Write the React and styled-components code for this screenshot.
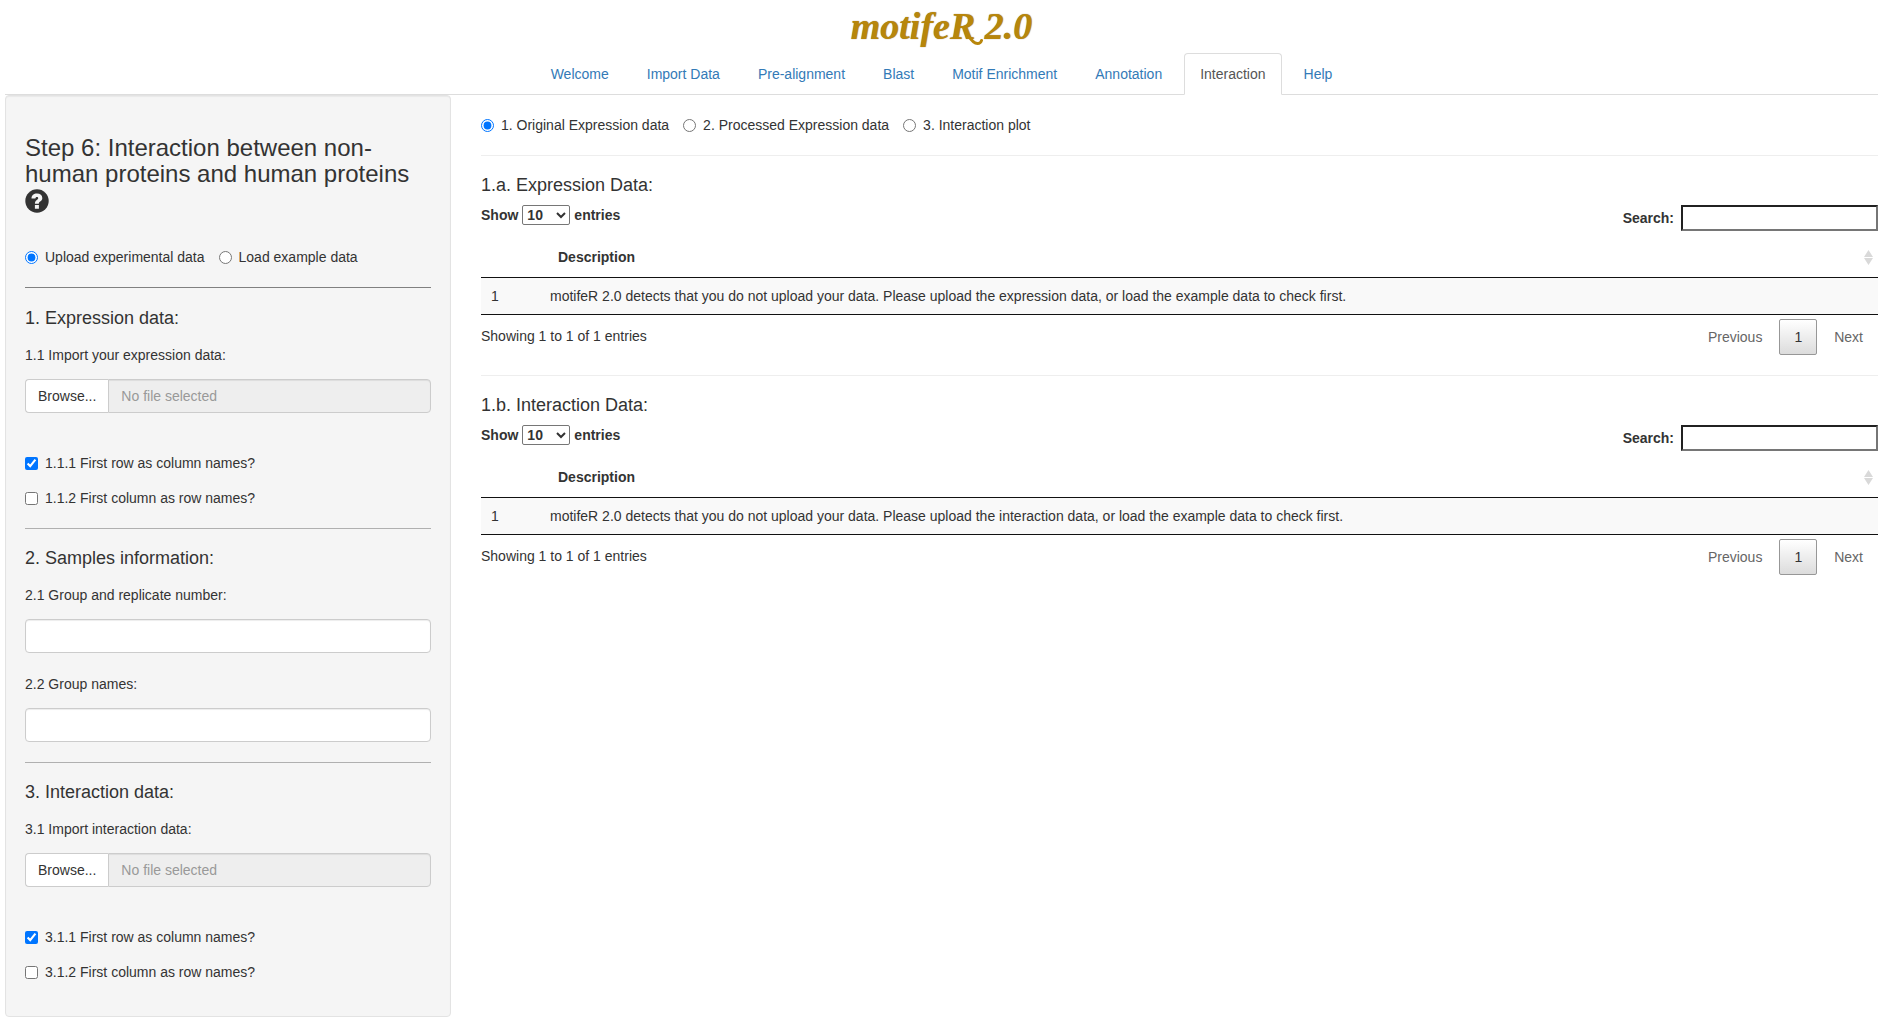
import React from "react";
import styled, { createGlobalStyle, css } from "styled-components";

const Global = createGlobalStyle`
  *, *::before, *::after { box-sizing: border-box; }
  body {
    margin: 0;
    background: #fff;
    color: #333;
    font: 14px/20px "Liberation Sans", Arial, Helvetica, sans-serif;
  }
  input, select, button { font: inherit; color: inherit; }
`;

const Page = styled.div`
  padding: 5px 11px 0 5px;
`;

const Brand = styled.h1`
  display: flex;
  justify-content: center;
  margin: 0;
  padding-bottom: 6px;
  color: #b8860b;
  font: italic bold 38px/42px "Liberation Serif", "Times New Roman", serif;
  text-shadow: 0 0 1px #8a7440;
  white-space: pre;
`;

const Swashed = styled.span`
  position: relative;
`;

const Swash = styled.svg`
  position: absolute;
  right: -8px;
  bottom: 1px;
  width: 16px;
  height: 12px;
`;

const Tabs = styled.nav`
  display: flex;
  justify-content: center;
  gap: 6px;
  border-bottom: 1px solid #ddd;
`;

const Tab = styled.a`
  margin-bottom: -1px;
  padding: 10px 15px;
  border: 1px solid transparent;
  border-radius: 4px 4px 0 0;
  color: #337ab7;
  text-decoration: none;
  ${(p) =>
    p.$active &&
    css`
      border-color: #ddd;
      border-bottom-color: #fff;
      background: #fff;
      color: #555;
    `}
`;

const Columns = styled.div`
  display: grid;
  grid-template-columns: minmax(0, 446fr) minmax(0, 1397fr);
  column-gap: 30px;
  align-items: start;
`;

const Sidebar = styled.aside`
  padding: 19px 19px 14px;
  border: 1px solid #e3e3e3;
  border-radius: 4px;
  background: #f5f5f5;
  box-shadow: inset 0 1px 1px rgba(0, 0, 0, 0.05);
`;

const StepTitle = styled.h2`
  margin: 20px 0 34px;
  font-size: 24px;
  line-height: 26px;
  font-weight: 500;
`;

const HelpIcon = styled.svg`
  display: block;
  width: 24px;
  height: 24px;
  margin-top: 2px;
`;

const SectionTitle = styled.h3`
  margin: 0 0 ${(p) => (p.$tight ? 10 : 17)}px;
  font-size: 18px;
  line-height: 20px;
  font-weight: 500;
`;

const Rule = styled.hr`
  height: 1px;
  margin: 20px 0 ${(p) => (p.$strong ? 20 : 19)}px;
  border: 0;
  background: ${(p) => (p.$strong ? "#808080" : p.$medium ? "#b0b0b0" : "#eee")};
`;

const Choices = styled.div`
  display: flex;
  flex-wrap: wrap;
  gap: 14px;
`;

const Choice = styled.label`
  display: flex;
  align-items: center;
  gap: 7px;
  input {
    width: 13px;
    height: 13px;
    margin: 0;
    accent-color: #0075ff;
  }
`;

const Checks = styled.div`
  display: grid;
  gap: 15px;
  margin: 40px 0 20px;
`;

const Field = styled.div`
  display: grid;
  gap: 14px;
  & + & { margin-top: 21px; }
`;

const inputBox = css`
  width: 100%;
  min-width: 0;
  height: 34px;
  padding: 6px 12px;
  border: 1px solid #ccc;
  border-radius: 4px;
  box-shadow: inset 0 1px 1px rgba(0, 0, 0, 0.075);
`;

const TextInput = styled.input`
  ${inputBox}
  background: #fff;
`;

const FileRow = styled.div`
  display: flex;
`;

const Browse = styled.button`
  flex: none;
  height: 34px;
  padding: 6px 12px;
  border: 1px solid #ccc;
  border-right: 0;
  border-radius: 4px 0 0 4px;
  background: #fff;
`;

const FileName = styled.input`
  ${inputBox}
  border-radius: 0 4px 4px 0;
  background: #eee;
  &::placeholder { color: #999; opacity: 1; }
`;

const Main = styled.main`
  padding-top: 20px;
`;

const TableTop = styled.div`
  display: flex;
  justify-content: space-between;
  align-items: start;
  font-weight: 700;
`;

const Length = styled.label`
  display: flex;
  align-items: center;
  gap: 4px;
`;

const LengthSelect = styled.select`
  width: 48px;
  height: 20px;
  padding: 0;
  border: 1px solid #767676;
  border-radius: 2px;
  background: #fff;
`;

const Search = styled.label`
  display: flex;
  align-items: center;
  gap: 7px;
`;

const SearchInput = styled.input`
  width: 197px;
  height: 26px;
  padding: 1px 2px;
  border: 2px inset #767676;
  background: #fff;
`;

const Table = styled.table`
  width: 100%;
  border-collapse: separate;
  border-spacing: 0;
  border-bottom: 1px solid #111;
  th {
    padding: 16px 18px 10px;
    border-bottom: 1px solid #111;
    text-align: left;
  }
  th:first-child { width: 59px; }
  td {
    padding: 8px 10px;
    background: #f9f9f9;
  }
`;

const HeadCell = styled.div`
  display: flex;
  justify-content: space-between;
  align-items: center;
  margin-right: -13px;
`;

const TableFoot = styled.div`
  display: flex;
  justify-content: space-between;
  align-items: start;
  padding-top: 4px;
`;

const Info = styled.div`
  padding-top: 7px;
`;

const Pager = styled.div`
  display: flex;
  gap: 2px;
`;

const PageButton = styled.button`
  height: 36px;
  padding: 0 14px;
  border: 1px solid transparent;
  border-radius: 2px;
  background: transparent;
  color: #666;
  ${(p) =>
    p.$current &&
    css`
      border-color: #979797;
      background: linear-gradient(#fff, #dcdcdc);
      color: #333;
    `}
`;

const tabs = ["Welcome", "Import Data", "Pre-alignment", "Blast", "Motif Enrichment", "Annotation", "Interaction", "Help"];

function FileField({ id, label }) {
  return (
    <Field>
      <label htmlFor={id}>{label}</label>
      <FileRow>
        <Browse type="button">Browse...</Browse>
        <FileName id={id} placeholder="No file selected" readOnly />
      </FileRow>
    </Field>
  );
}

function TextField({ id, label }) {
  return (
    <Field>
      <label htmlFor={id}>{label}</label>
      <TextInput id={id} type="text" />
    </Field>
  );
}

function RadioGroup({ name, options }) {
  return (
    <Choices role="radiogroup">
      {options.map((text, i) => (
        <Choice key={text}>
          <input type="radio" name={name} defaultChecked={i === 0} />
          {text}
        </Choice>
      ))}
    </Choices>
  );
}

function HeaderChecks({ prefix }) {
  return (
    <Checks>
      <Choice>
        <input type="checkbox" defaultChecked />
        {prefix + ".1 First row as column names?"}
      </Choice>
      <Choice>
        <input type="checkbox" />
        {prefix + ".2 First column as row names?"}
      </Choice>
    </Checks>
  );
}

function DataTable({ title, message }) {
  return (
    <section>
      <SectionTitle $tight>{title}</SectionTitle>
      <TableTop>
        <Length>
          Show
          <LengthSelect defaultValue="10">
            <option>10</option>
            <option>25</option>
            <option>50</option>
          </LengthSelect>
          entries
        </Length>
        <Search>
          Search:
          <SearchInput type="search" />
        </Search>
      </TableTop>
      <Table>
        <thead>
          <tr>
            <th />
            <th>
              <HeadCell>
                Description
                <svg width="9" height="15" viewBox="0 0 9 15" fill="#d9d9d9" aria-hidden="true">
                  <path d="M4.500 0 9 7H0zM0 8h9l-4.500 7z" />
                </svg>
              </HeadCell>
            </th>
          </tr>
        </thead>
        <tbody>
          <tr>
            <td>1</td>
            <td>{message}</td>
          </tr>
        </tbody>
      </Table>
      <TableFoot>
        <Info>Showing 1 to 1 of 1 entries</Info>
        <Pager>
          <PageButton type="button">Previous</PageButton>
          <PageButton type="button" $current>1</PageButton>
          <PageButton type="button">Next</PageButton>
        </Pager>
      </TableFoot>
    </section>
  );
}

export default function App() {
  return (
    <Page>
      <Global />
      <Brand>
        <Swashed>
          motifeR
          <Swash viewBox="0 0 16 12" aria-hidden="true">
            <path d="M1 1C4 6 7 9.500 10.500 9.500c2 0 3.500-1 4-3" fill="none" stroke="#b8860b" strokeWidth="3" strokeLinecap="round" />
          </Swash>
        </Swashed>
        {" 2.0"}
      </Brand>
      <Tabs>
        {tabs.map((t) => (
          <Tab key={t} href="#" $active={t === "Interaction"}>{t}</Tab>
        ))}
      </Tabs>
      <Columns>
        <Sidebar>
          <StepTitle>
            Step 6: Interaction between non-human proteins and human proteins
            <HelpIcon viewBox="0 0 24 24" role="img" aria-label="Help">
              <circle cx="12" cy="12" r="11.700" fill="#333" />
              <path d="M6.500 9.600C6.500 6.200 8.800 4.600 12 4.600s5.300 1.700 5.300 4.500c0 3.500-3.500 3.600-3.500 5.600h-3.900c0-3.600 3.300-3.900 3.300-5.500 0-.8-.5-1.200-1.300-1.200-.9 0-1.500.6-1.500 1.600zM9.900 15.900h4v3.900h-4z" fill="#f5f5f5" />
            </HelpIcon>
          </StepTitle>
          <RadioGroup name="source" options={["Upload experimental data", "Load example data"]} />
          <Rule $strong />
          <SectionTitle>1. Expression data:</SectionTitle>
          <FileField id="expression-file" label="1.1 Import your expression data:" />
          <HeaderChecks prefix="1.1" />
          <Rule $medium />
          <SectionTitle>2. Samples information:</SectionTitle>
          <TextField id="group-number" label="2.1 Group and replicate number:" />
          <TextField id="group-names" label="2.2 Group names:" />
          <Rule $medium />
          <SectionTitle>3. Interaction data:</SectionTitle>
          <FileField id="interaction-file" label="3.1 Import interaction data:" />
          <HeaderChecks prefix="3.1" />
        </Sidebar>
        <Main>
          <RadioGroup
            name="view"
            options={["1. Original Expression data", "2. Processed Expression data", "3. Interaction plot"]}
          />
          <Rule />
          <DataTable
            title="1.a. Expression Data:"
            message="motifeR 2.0 detects that you do not upload your data. Please upload the expression data, or load the example data to check first."
          />
          <Rule />
          <DataTable
            title="1.b. Interaction Data:"
            message="motifeR 2.0 detects that you do not upload your data. Please upload the interaction data, or load the example data to check first."
          />
        </Main>
      </Columns>
    </Page>
  );
}
